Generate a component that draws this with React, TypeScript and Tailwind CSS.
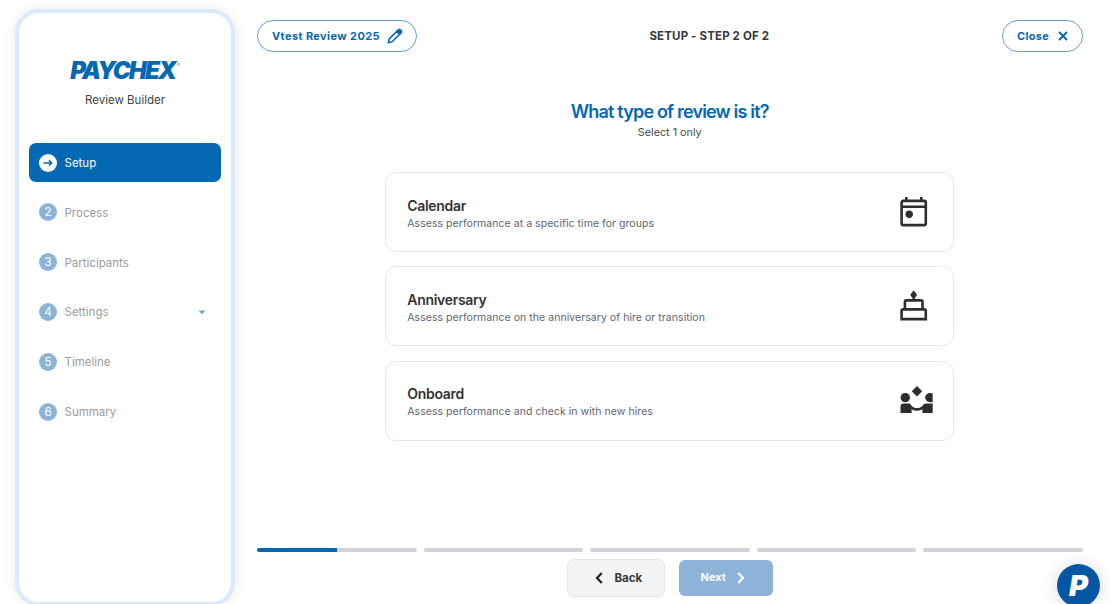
import clsx from "clsx";

interface NavStep {
  label: string;
  hasMenu?: boolean;
}

interface ReviewType {
  title: string;
  description: string;
  icon: React.ReactNode;
}

const navSteps: NavStep[] = [
  { label: "Setup" },
  { label: "Process" },
  { label: "Participants" },
  { label: "Settings", hasMenu: true },
  { label: "Timeline" },
  { label: "Summary" },
];

const progress = [50, 0, 0, 0, 0];

function CalendarIcon() {
  return (
    <svg width="28" height="31" viewBox="0 0 28 31" fill="none" stroke="#2e2e2e" strokeWidth="2.6">
      <rect x="1.6" y="4.9" width="24.2" height="24.2" rx="1.6" />
      <path d="M2 10.7h24M6.3 1v4M21.3 1v4" />
      <circle cx="9.2" cy="18.2" r="3.7" fill="#2e2e2e" stroke="none" />
    </svg>
  );
}

function CakeIcon() {
  return (
    <svg width="28" height="31" viewBox="0 0 28 31" fill="none" stroke="#2e2e2e" strokeWidth="2.6">
      <path d="M13.7 6v5" />
      <path d="M13.7 .3l3.2 4.3c0 1.9-1.4 3.2-3.2 3.2s-3.2-1.3-3.2-3.2z" fill="#2e2e2e" stroke="none" />
      <path d="M4.9 19.5v-7.6q0-1.5 1.5-1.5h14.6q1.5 0 1.5 1.5v7.6" />
      <path d="M1.6 29.1V21q0-1.6 1.6-1.6h21q1.6 0 1.6 1.6v8.1z" />
    </svg>
  );
}

function OnboardIcon() {
  return (
    <svg width="34" height="28" viewBox="0 0 34 28" fill="#2e2e2e">
      <path d="M17 0l5.2 5.2L17 10.4l-5.2-5.2z" />
      <circle cx="5.3" cy="11.6" r="4.7" />
      <path d="M32.7 7.4v8.5c-.8.3-1.5.4-2.3.4-3 0-5.2-2-5.2-4.7s2.2-4.7 5.2-4.7c.8 0 1.5.2 2.3.5z" />
      <path d="M.5 27v-6.5q0-3 3-3h5.2c1.6 0 2.6 1 2.9 3.2V27z" />
      <path d="M32.7 27v-9.5h-6.4c-2.2 0-3.4 1-3.9 3.2V27z" />
      <path d="M9.5 19.8q3 3.6 7.5 3.6t7.5-3.6" fill="none" stroke="#2e2e2e" strokeWidth="2.6" />
    </svg>
  );
}

function PencilIcon() {
  return (
    <svg width="16" height="16" viewBox="0 0 16 16" fill="none" stroke="#0568b3" strokeWidth="1.5" strokeLinejoin="round">
      <path d="M1.2 14.8l1-3.9 7.6-7.6 2.9 2.9-7.6 7.6z" />
      <path d="M9.8 3.3l1.6-1.6q.9-.9 1.8 0l1.1 1.1q.9.9 0 1.8l-1.6 1.6z" fill="#0568b3" />
    </svg>
  );
}

const reviewTypes: ReviewType[] = [
  {
    title: "Calendar",
    description: "Assess performance at a specific time for groups",
    icon: <CalendarIcon />,
  },
  {
    title: "Anniversary",
    description: "Assess performance on the anniversary of hire or transition",
    icon: <CakeIcon />,
  },
  {
    title: "Onboard",
    description: "Assess performance and check in with new hires",
    icon: <OnboardIcon />,
  },
];

function Sidebar() {
  return (
    <aside className="ml-[15px] mt-[9px] h-[597px] w-[220px] shrink-0 rounded-[24px] border-4 border-[#dbe9fe] bg-white px-[10px] shadow-[0_0_14px_rgba(0,0,0,0.09)]">
      <div className="flex flex-col items-center pt-[44px]">
        <div className="flex h-[27px] items-center text-[#0568b3]">
          <span className="text-[24px] leading-none font-black italic tracking-[-1.85px]">PAYCHEX</span>
          <span className="mb-3 ml-0.5 text-[4px]">®</span>
        </div>
        <p className="mt-[8px] text-[11.5px] leading-4 text-[#444]">Review Builder</p>
      </div>
      <nav className="mt-[35.2px] flex flex-col gap-[10.8px]">
        {navSteps.map((step, i) => (
          <div
            key={step.label}
            className={clsx(
              "flex h-[39px] items-center gap-[7.5px] rounded-[7px] pl-[10px] pr-[15px] text-[11.5px]",
              i === 0 ? "bg-[#0568b3] text-white" : "text-[#9c9c9c]"
            )}
          >
            <span
              className={clsx(
                "flex size-[18px] items-center justify-center rounded-full pt-px",
                i === 0 ? "bg-white text-[#0568b3]" : "bg-[#8db3d9] text-white"
              )}
            >
              {i === 0 ? (
                <svg className="mb-px" width="10" height="8" viewBox="0 0 10 8" fill="none" stroke="currentColor" strokeWidth="1.4">
                  <path d="M.5 4h8M5.8 1.3L8.7 4 5.8 6.7" />
                </svg>
              ) : (
                i + 1
              )}
            </span>
            <span className="pt-0.5">{step.label}</span>
            {step.hasMenu && (
              <svg className="ml-auto" width="8" height="5" viewBox="0 0 8 5" fill="#6ba4d3">
                <path d="M.5.5h7L4 4.3z" />
              </svg>
            )}
          </div>
        ))}
      </nav>
    </aside>
  );
}

export default function App() {
  return (
    <div className="relative flex h-[604px] w-[1110px] overflow-hidden bg-white font-[Inter,sans-serif]">
      <Sidebar />

      <main className="ml-[22px] mr-[27.5px] flex flex-1 flex-col">
        <header className="mt-5 flex items-center justify-between text-[11px] font-bold">
          <button className="flex h-8 w-[160px] items-center justify-between rounded-full border-[1.5px] border-[#66a0d1] pl-[14px] pr-[13px] tracking-[0.4px] text-[#0568b3]">
            Vtest Review 2025
            <PencilIcon />
          </button>
          <span className="pt-0.5 text-[11.5px] tracking-[0.15px] text-[#383838]">SETUP - STEP 2 OF 2</span>
          <button className="flex h-8 w-[81px] items-center justify-between rounded-full border-[1.5px] border-[#66a0d1] pl-[14.5px] pr-[14px] tracking-[0.3px] text-[#0568b3]">
            Close
            <svg width="10" height="10" viewBox="0 0 10 10" fill="none" stroke="currentColor" strokeWidth="1.9">
              <path d="M1 1l8 8M9 1L1 9" />
            </svg>
          </button>
        </header>

        <div className="mt-[48px] text-center">
          <h1 className="text-[18px] leading-6 font-semibold tracking-[-0.82px] text-[#0568b3]">
            What type of review is it?
          </h1>
          <p className="pt-px text-[10.8px] leading-4 text-[#4a4a4a]">Select 1 only</p>
        </div>

        {/* Review type options */}
        <div className="mx-auto mt-[31px] flex w-[569px] flex-col gap-[14.3px]">
          {reviewTypes.map((type) => (
            <button
              key={type.title}
              className="flex h-20 items-center justify-between rounded-[11px] border border-[#e9e9eb] pl-[21px] pr-[19px] text-left"
            >
              <div className="pt-[3px]">
                <div className="text-[14px] leading-5 font-semibold tracking-[-0.3px] text-[#333]">{type.title}</div>
                <div className="text-[10.5px] leading-4 tracking-[0.05px] text-[#5d6673]">{type.description}</div>
              </div>
              <div className="w-[34px] pb-[1.5px]">{type.icon}</div>
            </button>
          ))}
        </div>

        {/* Progress */}
        <div className="mt-[107px] flex gap-[7px]">
          {progress.map((value, i) => (
            <div key={i} className="h-1 flex-1 overflow-hidden rounded-full bg-[#d0d3da]">
              <div className="h-full bg-[#0568b3]" style={{ width: `${value}%` }} />
            </div>
          ))}
        </div>

        <footer className="mt-[7px] flex items-center justify-center gap-[14px] text-[11.5px] font-bold">
          <button className="flex h-[38px] w-[98px] items-center justify-center gap-[11px] rounded-[7px] border border-[#e6e8ec] bg-[#f2f3f5] pt-px pl-[6px] text-[#383838]">
            <svg width="8" height="12" viewBox="0 0 8 12" fill="none" stroke="#1f1f1f" strokeWidth="2.2">
              <path d="M6.8 1L2 6l4.8 5" />
            </svg>
            <span className="pt-px">Back</span>
          </button>
          <button className="flex h-9 w-[94px] items-center justify-center gap-[11px] rounded-[6px] bg-[#8db3d9] pr-[6px] text-[11px] text-white">
            Next
            <svg width="8" height="12" viewBox="0 0 8 12" fill="none" stroke="currentColor" strokeWidth="2.2">
              <path d="M1.2 1L6 6l-4.8 5" />
            </svg>
          </button>
        </footer>
      </main>

      {/* Floating help launcher */}
      <button className="absolute left-[1057px] top-[564px] flex size-[43px] items-center justify-center rounded-full bg-[#0556a5] text-[29px] font-black italic text-white shadow-[0_1px_18px_rgba(0,0,0,0.16)]">
        P
      </button>
    </div>
  );
}
